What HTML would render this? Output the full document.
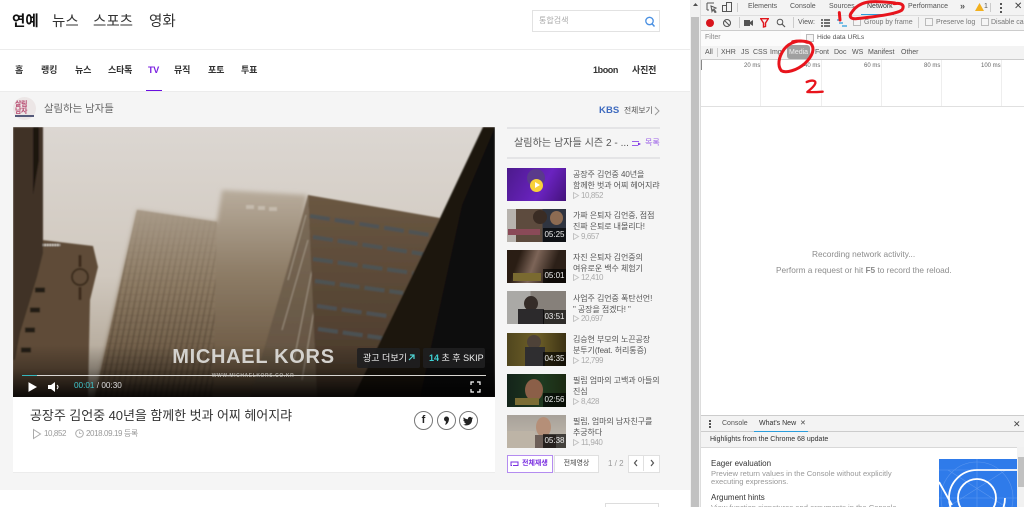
<!DOCTYPE html>
<html lang="ko"><head><meta charset="utf-8"><title>연예</title>
<style>
html,body{margin:0;padding:0;background:#fff;width:1024px;height:507px;overflow:hidden}
#r{position:relative;width:1024px;height:507px;overflow:hidden;background:#fff;font-family:"Liberation Sans","Noto Sans CJK KR",sans-serif;color:#222}
#r div{position:absolute;white-space:nowrap}
.n{font-size:9px;font-weight:700;color:#333;top:64px;line-height:12px;letter-spacing:-.2px}
.g{font-size:14.500px;top:12px;line-height:20px;color:#333}
.t{font-size:8px;color:#555;line-height:11px;left:573px;letter-spacing:-.08px}
.v{font-size:8px;color:#aaa;line-height:10px;left:581px;letter-spacing:-.4px}
.p{position:absolute;left:573px}
.th{left:507px;width:59px;height:33px;overflow:hidden}
.d{right:0;bottom:0;width:23px;height:14px;background:rgba(0,0,0,.65);color:#eee;font-size:8px;line-height:14px;text-align:center}
.dt{font-family:"Liberation Sans",sans-serif;font-size:7px;color:#555;line-height:10px}
.ck{width:6px;height:6px;border:1px solid #bbb;background:#f5f5f5}
.ms{font-family:"Liberation Sans",sans-serif;font-size:6px;color:#666;top:62px;line-height:8px}
.gl{top:60px;width:1px;height:46px;background:#eee}
.c{width:17px;height:17px;border:1px solid #777;border-radius:50%;top:411px;background:#fff;text-align:center;font-size:11px;line-height:17px;font-weight:700;color:#222}
</style></head><body><div id="r">

<div style="left:0;top:0;width:690px;height:507px;background:#fff"></div>
<div class="g" style="left:12px;font-weight:700;color:#111">연예</div>
<div class="g" style="left:52px">뉴스</div>
<div class="g" style="left:93px">스포츠</div>
<div class="g" style="left:149px">영화</div>
<div style="left:532px;top:10px;width:126px;height:20px;border:1px solid #e2e2e2"></div>
<div style="left:539px;top:15px;font-size:8px;color:#aaa;line-height:11px">통합검색</div>
<svg style="position:absolute;left:644px;top:16px" width="12" height="12" viewBox="0 0 12 12"><circle cx="5.500" cy="5" r="3.700" fill="none" stroke="#4a90e2" stroke-width="1.300"/><path d="M8 7.800L10.500 10.500" stroke="#4a90e2" stroke-width="1.500"/></svg>
<div style="left:0;top:49px;width:690px;height:1px;background:#ececec"></div>

<div class="n" style="left:15px">홈</div>
<div class="n" style="left:41px">랭킹</div>
<div class="n" style="left:75px">뉴스</div>
<div class="n" style="left:108px">스타톡</div>
<div class="n" style="left:148px;color:#7a1fe0">TV</div>
<div class="n" style="left:174px">뮤직</div>
<div class="n" style="left:208px">포토</div>
<div class="n" style="left:241px">투표</div>
<div class="n" style="left:593px;letter-spacing:-.4px">1boon</div>
<div class="n" style="left:632px">사진전</div>

<div style="left:0;top:91px;width:690px;height:399px;background:#f5f5f5;border-top:1px solid #ececec;box-sizing:border-box"></div>
<div style="left:146px;top:90px;width:16px;height:1px;background:#6a10e0"></div>
<div style="left:13px;top:97px;width:23px;height:23px;border-radius:50%;background:#ece6e6"></div>
<div style="left:15px;top:101px;font-size:7px;font-weight:700;color:#b84a70;line-height:7px;letter-spacing:-.5px">살림<br>남자</div>
<div style="left:15px;top:115px;width:19px;height:2px;background:#555a7a"></div>
<div style="left:44px;top:103px;font-size:10.400px;color:#666;line-height:14px">살림하는 남자들</div>
<div style="left:599px;top:104px;font-size:9.500px;font-weight:700;color:#3f6bbf;line-height:13px;letter-spacing:.1px">KBS</div>
<div style="left:624px;top:105px;font-size:7.800px;color:#555;line-height:11px">전체보기</div>
<svg style="position:absolute;left:654px;top:106px" width="7" height="10"><path d="M1 1l4 4-4 4" fill="none" stroke="#999" stroke-width="1"/></svg>

<svg style="position:absolute;left:13px;top:127px" width="482" height="270" viewBox="13 127 482 270">
<defs>
<linearGradient id="sky" x1="0" y1="0" x2="0" y2="1"><stop offset="0" stop-color="#dcd7d2"/><stop offset=".55" stop-color="#d0c8be"/><stop offset="1" stop-color="#a89c8b"/></linearGradient>
<linearGradient id="tw" x1="0" y1="0" x2="0" y2="1"><stop offset="0" stop-color="#b8ac9c"/><stop offset=".4" stop-color="#8d7c66"/><stop offset="1" stop-color="#5e4b36"/></linearGradient>
<linearGradient id="tw2" x1="0" y1="0" x2="0" y2="1"><stop offset="0" stop-color="#a89a88"/><stop offset=".4" stop-color="#8d7b64"/><stop offset="1" stop-color="#5e4c38"/></linearGradient>
<linearGradient id="fc" x1="0" y1="0" x2="0" y2="1"><stop offset="0" stop-color="#7d6d5a"/><stop offset="1" stop-color="#5e4e3c"/></linearGradient>
<linearGradient id="br" x1="0" y1="0" x2="0" y2="1"><stop offset="0" stop-color="#6a5742"/><stop offset="1" stop-color="#463628"/></linearGradient>
<linearGradient id="fd" x1="0" y1="0" x2="0" y2="1"><stop offset="0" stop-color="#000" stop-opacity="0"/><stop offset=".45" stop-color="#000" stop-opacity=".25"/><stop offset="1" stop-color="#000" stop-opacity=".88"/></linearGradient>
<pattern id="win" width="5.500" height="7" patternUnits="userSpaceOnUse" patternTransform="skewX(-11)"><rect x="0" width="1.800" height="7" fill="#3a2d20" fill-opacity=".5"/><rect y="0" width="5.500" height="1" fill="#3a2d20" fill-opacity=".25"/></pattern>
<linearGradient id="wf" x1="0" y1="0" x2="0" y2="1"><stop offset="0" stop-color="#fff" stop-opacity="0"/><stop offset="1" stop-color="#fff" stop-opacity="1"/></linearGradient>
<mask id="wm"><rect x="13" y="210" width="300" height="190" fill="url(#wf)"/></mask>
<filter id="b" x="-2%" y="-2%" width="104%" height="104%"><feGaussianBlur stdDeviation=".7"/></filter>
<filter id="b2" x="-10%" y="-10%" width="120%" height="120%"><feGaussianBlur stdDeviation="2.500"/></filter>
</defs>
<rect x="13" y="127" width="482" height="270" fill="url(#sky)"/>
<g filter="url(#b2)"><path d="M137 210L217 222L222 190L307 195L300 250L262 397L95 397Z" fill="url(#tw)"/></g>
<g filter="url(#b)">
<path d="M137 210L217 222L213 397L95 397Z" fill="url(#tw2)"/>
<path d="M137 210L217 222L213 397L95 397Z" fill="url(#win)" mask="url(#wm)"/>
<path d="M246 205h8v4h-8zM258 206h7v4h-7zM269 207h8v4h-8z" fill="#cdc4b8" opacity=".7"/>
<path d="M308 195L318 397L250 397L290 260Z" fill="url(#fc)"/>
<path d="M306 215L288 280M308 240L282 330M312 270L294 360M314 310L302 380" stroke="#c6bcad" stroke-width="1" opacity=".55"/>
<path d="M308 195L440 218L353 397L317 397Z" fill="url(#br)"/>
<g fill="none" stroke="#4c5458" stroke-width="4" stroke-dasharray="20 5" opacity=".85">
<path d="M310 216L430 235"/><path d="M313 237L423 254"/><path d="M313 259L413 273"/><path d="M315 281L403 293"/><path d="M317 306L387 316"/><path d="M318 329L382 338"/>
</g>
<path d="M440 218L483 127L495 127L495 397L353 397Z" fill="#1a1510"/>
<path d="M462 205L495 127L495 397L420 397Z" fill="#0c0a08"/>
<path d="M42 240L93 246L98 267L90 300L88 397L13 397L13 300Z" fill="#5f4c37"/>
<path d="M42 245h18" stroke="#e8e2d8" stroke-width="2" stroke-dasharray="1.500 1"/>
<path d="M13 127H43V253L37 277L20 333L15 360H13Z" fill="#3f3325"/>
<path d="M33 127V195L39 160V127Z" fill="#1c150e"/>
<circle cx="80" cy="277" r="8" fill="none" stroke="#3a2c1f" stroke-width="2"/>
<path d="M80 255v12M80 287v13" stroke="#3a2c1f" stroke-width="3"/>
<path d="M35 290h10M30 310h10M25 330h10M21 350h10" stroke="#241b12" stroke-width="5"/>
</g>
<rect x="13" y="345" width="482" height="52" fill="url(#fd)"/>
<text x="253.500" y="363" text-anchor="middle" font-family="Liberation Sans" font-weight="700" font-size="20" letter-spacing=".7" fill="#d4d2ce">MICHAEL KORS</text>
<text x="253" y="377" text-anchor="middle" font-family="Liberation Sans" font-weight="700" font-size="5" letter-spacing=".6" fill="#a5a19b">WWW.MICHAELKORS.CO.KR</text>
<rect x="357" y="348" width="63" height="20" rx="2" fill="#1f1f20" fill-opacity=".9"/>
<rect x="423" y="348" width="62" height="20" rx="2" fill="#1f1f20" fill-opacity=".9"/>
<rect x="22" y="375" width="464" height="1" fill="#d8d6d2"/>
<rect x="22" y="375" width="15" height="1" fill="#35b6bd"/>
<path d="M29 383l7 4-7 4z" fill="#fff" stroke="#fff"/>
<path d="M48 385h3l4-3v10l-4-3h-3z" fill="#fff"/><path d="M57 385q2 2 0 4" fill="none" stroke="#fff"/>
<path d="M471 385v-3h3M477 382h3v3M480 389v3h-3M474 392h-3v-3" fill="none" stroke="#fff" stroke-width="1.200"/>
<path d="M409 360l5-5M410 355h4v4" fill="none" stroke="#4fd6d6" stroke-width="1.200"/>
</svg>
<div style="left:363px;top:352px;font-size:9px;color:#eee;line-height:12px">광고 더보기</div>
<div style="left:429px;top:352px;font-size:9px;color:#eee;line-height:12px"><b style="color:#3fd3d6">14</b> 초 후 SKIP</div>
<div style="left:74px;top:380px;font-size:8.200px;color:#ddd;line-height:12px"><span style="color:#3fc6cc">00:01</span> / 00:30</div>

<div style="left:13px;top:397px;width:482px;height:75px;background:#fff;border-bottom:1px solid #ececec"></div>
<div style="left:30px;top:407px;font-size:13px;color:#333;line-height:18px;letter-spacing:-.05px">공장주 김언중 40년을 함께한 벗과 어찌 헤어지랴</div>
<svg style="position:absolute;left:32px;top:428px" width="10" height="12"><path d="M1.500 1.500l7 4.500-7 4.500z" fill="none" stroke="#aaa"/></svg>
<div style="left:44px;top:428px;font-size:8px;color:#999;line-height:11px;letter-spacing:-.4px">10,852</div>
<svg style="position:absolute;left:74px;top:428px" width="11" height="11"><circle cx="5.500" cy="5.500" r="3.800" fill="none" stroke="#aaa"/><path d="M5.500 3.500v2h2" fill="none" stroke="#aaa" stroke-width=".8"/></svg>
<div style="left:86px;top:428px;font-size:8px;color:#999;line-height:11px;letter-spacing:-.4px">2018.09.19 등록</div>
<div class="c" style="left:414px;font-family:'Liberation Sans',sans-serif">f</div>
<div class="c" style="left:437px"></div>
<svg style="position:absolute;left:437px;top:411px" width="19" height="19"><circle cx="9.500" cy="8" r="2.500" fill="#222"/><path d="M11.800 8.500C11.800 11 10.500 12.800 8.500 14L8.300 13C9 12 9 11 8.800 10z" fill="#222"/></svg>
<div class="c" style="left:459px"></div>
<svg style="position:absolute;left:459px;top:411px" width="19" height="19"><path d="M14 6.500l-1.200.4c-.4-.6-1-1-1.800-1-1.400 0-2.300 1.100-2 2.400-1.800-.1-3.300-.9-4.300-2.100-.6 1-.3 2.200.6 2.900l-1-.3c0 1.100.8 2 1.800 2.200l-.9.100c.3.800 1.100 1.400 2 1.500-.9.700-2 1-3.100.9 3.800 2.300 9.200.2 9-5.100z" fill="#222"/></svg>

<div style="left:507px;top:127px;width:153px;height:2px;background:#e4e4e6"></div>
<div style="left:514px;top:137px;font-size:10.100px;color:#555;line-height:14px">살림하는 남자들 시즌 2 - ...</div>
<svg style="position:absolute;left:632px;top:140px" width="10" height="7"><path d="M0 1.500h7M0 5.500h6" stroke="#9a5ee8" stroke-width="1"/><path d="M6 2.500l3 1.500-3 1.500z" fill="#7a2fe0"/></svg>
<div style="left:645px;top:137px;font-size:8px;color:#9a5ee8;line-height:12px">목록</div>
<div style="left:507px;top:157px;width:153px;height:2px;background:#e4e4e6"></div>

<div class="th" style="top:168px;background:linear-gradient(120deg,#4c1a8c,#6a23c0 60%,#43127a)">
<div style="left:20px;top:1px;width:18px;height:18px;border-radius:50%;background:#5a3a8c"></div>
<div style="left:23px;top:11px;width:13px;height:13px;border-radius:50%;background:#f7d13a"></div>
<div style="left:28px;top:14px;width:0;height:0;border-left:5px solid #fff;border-top:3.500px solid transparent;border-bottom:3.500px solid transparent"></div>
</div>
<div class="th" style="top:209px;background:linear-gradient(90deg,#b7b3ae 0 15%,#5d4b3e 15% 60%,#2f3440 60%)">
<div style="left:26px;top:1px;width:14px;height:14px;border-radius:50%;background:#3a2c24"></div>
<div style="left:43px;top:2px;width:13px;height:14px;border-radius:50%;background:#8d6b52"></div>
<div style="left:1px;top:20px;width:32px;height:6px;background:#8a4a58"></div>
<div class="d">05:25</div></div>
<div class="th" style="top:250px;background:linear-gradient(110deg,#2a1d14 20%,#7d6558 45%,#2c2018 75%)">
<div style="left:6px;top:23px;width:28px;height:8px;background:#7a6a30"></div>
<div class="d">05:01</div></div>
<div class="th" style="top:291px;background:linear-gradient(90deg,#aaa9a6 0 40%,#86807a 40% 100%)">
<div style="left:17px;top:5px;width:14px;height:15px;border-radius:50%;background:#352c28"></div>
<div style="left:11px;top:18px;width:26px;height:15px;background:#2c2a2c"></div>
<div class="d">03:51</div></div>
<div class="th" style="top:333px;background:linear-gradient(90deg,#50461e,#6e6028 50%,#3c3214)">
<div style="left:20px;top:2px;width:14px;height:14px;border-radius:50%;background:#4e4238"></div>
<div style="left:18px;top:14px;width:20px;height:19px;background:#2f2e30"></div>
<div class="d">04:35</div></div>
<div class="th" style="top:374px;background:linear-gradient(90deg,#14241a,#1f3a20 60%,#1c2a12)">
<div style="left:18px;top:5px;width:18px;height:22px;border-radius:50%;background:#8b5f48"></div>
<div style="left:8px;top:24px;width:24px;height:7px;background:#7c6d35"></div>
<div class="d">02:56</div></div>
<div class="th" style="top:415px;background:linear-gradient(#a8a29a,#c4bcb0)">
<div style="left:29px;top:2px;width:15px;height:20px;border-radius:50%;background:#b58f78"></div>
<div style="left:24px;top:20px;width:25px;height:13px;background:#6d5f58"></div>
<div style="left:0;top:16px;width:28px;height:17px;background:#bdb4a6"></div>
<div class="d">05:38</div></div>

<div class="t" style="top:169px">공장주 김언중 40년을<br>함께한 벗과 어찌 헤어지랴</div><svg class="p" style="top:192px" width="7" height="7"><path d="M.5.500L5.500 3.500.5 6.500z" fill="none" stroke="#c4c4c4"/></svg><div class="v" style="top:191px">10,852</div>
<div class="t" style="top:210px">가짜 은퇴자 김언중, 점점<br>진짜 은퇴로 내몰리다!</div><svg class="p" style="top:233px" width="7" height="7"><path d="M.5.500L5.500 3.500.5 6.500z" fill="none" stroke="#c4c4c4"/></svg><div class="v" style="top:232px">9,657</div>
<div class="t" style="top:252px">자진 은퇴자 김언중의<br>여유로운 백수 체험기</div><svg class="p" style="top:274px" width="7" height="7"><path d="M.5.500L5.500 3.500.5 6.500z" fill="none" stroke="#c4c4c4"/></svg><div class="v" style="top:273px">12,410</div>
<div class="t" style="top:293px">사업주 김언중 폭탄선언!<br>" 공장을 접겠다! "</div><svg class="p" style="top:315px" width="7" height="7"><path d="M.5.500L5.500 3.500.5 6.500z" fill="none" stroke="#c4c4c4"/></svg><div class="v" style="top:314px">20,697</div>
<div class="t" style="top:334px">김승현 부모의 노끈공장<br>분투기(feat. 허리통증)</div><svg class="p" style="top:357px" width="7" height="7"><path d="M.5.500L5.500 3.500.5 6.500z" fill="none" stroke="#c4c4c4"/></svg><div class="v" style="top:356px">12,799</div>
<div class="t" style="top:375px">필립 엄마의 고백과 아들의<br>진심</div><svg class="p" style="top:398px" width="7" height="7"><path d="M.5.500L5.500 3.500.5 6.500z" fill="none" stroke="#c4c4c4"/></svg><div class="v" style="top:397px">8,428</div>
<div class="t" style="top:416px">필립, 엄마의 남자친구를<br>추궁하다</div><svg class="p" style="top:439px" width="7" height="7"><path d="M.5.500L5.500 3.500.5 6.500z" fill="none" stroke="#c4c4c4"/></svg><div class="v" style="top:438px">11,940</div>

<div style="left:507px;top:455px;width:44px;height:16px;border:1px solid #b48cf0;background:#fff"></div>
<div style="left:522px;top:456px;font-size:7px;line-height:16px;color:#7a2fe0;font-weight:700">전체재생</div>
<svg style="position:absolute;left:510px;top:460px" width="10" height="7"><path d="M2 5.500H1V2h7M8 1.500V5.500H3" fill="none" stroke="#7a2fe0"/></svg>
<div style="left:554px;top:455px;width:43px;height:16px;border:1px solid #e0e0e0;background:#fff;font-size:7px;line-height:16px;color:#444;text-align:center">전체영상</div>
<div style="left:608px;top:458px;font-size:8px;color:#999;line-height:11px">1 / 2</div>
<div style="left:628px;top:455px;width:30px;height:16px;border:1px solid #e0e0e0;background:#fff"></div>
<div style="left:643px;top:455px;width:1px;height:16px;background:#e0e0e0"></div>
<svg style="position:absolute;left:633px;top:459px" width="26" height="9"><path d="M4 1L1.500 4 4 7" fill="none" stroke="#555" stroke-width="1.200"/><path d="M18 1l2.500 3L18 7" fill="none" stroke="#555" stroke-width="1.200"/></svg>
<div style="left:605px;top:503px;width:54px;height:4px;border:1px solid #ddd;border-bottom:0;background:#fff;box-sizing:border-box"></div>

<div style="left:690px;top:0;width:10px;height:507px;background:#f1f1f1"></div>
<div style="left:691px;top:17px;width:8px;height:490px;background:#c1c1c1"></div>
<svg style="position:absolute;left:692px;top:2px" width="7" height="5"><path d="M3.500 1L6 4H1z" fill="#505050"/></svg>

<div style="left:700px;top:0;width:324px;height:507px;background:#fff;border-left:1px solid #ddd;box-sizing:border-box"></div>
<div style="left:701px;top:0;width:323px;height:15px;background:#f3f3f3;border-bottom:1px solid #ddd"></div>
<div style="left:701px;top:16px;width:323px;height:14px;background:#f3f3f3;border-bottom:1px solid #ccc"></div>
<div style="left:701px;top:31px;width:323px;height:15px;background:#fff"></div>
<div style="left:701px;top:31px;width:100px;height:15px;background:#fbfbfb"></div>
<div style="left:701px;top:46px;width:323px;height:13px;background:#f3f3f3;border-bottom:1px solid #ccc"></div>
<svg style="position:absolute;left:706px;top:2px" width="32" height="11"><path d="M1 1h7M1 1v7M1 8h2M5 4l5 2-2 1 2 3-1 .500-2-3-1 2z" fill="none" stroke="#555"/><rect x="16.500" y="3.500" width="4" height="6" fill="none" stroke="#555"/><rect x="20.500" y=".5" width="5" height="9" fill="none" stroke="#555"/></svg>
<div style="left:737px;top:3px;width:1px;height:9px;background:#ccc"></div>
<div class="dt" style="left:748px;top:2px">Elements</div>
<div class="dt" style="left:790px;top:2px">Console</div>
<div class="dt" style="left:829px;top:2px">Sources</div>
<div class="dt" style="left:867px;top:2px;color:#333">Network</div>
<div style="left:861px;top:14px;width:33px;height:1px;background:#2a9ddc"></div>
<div class="dt" style="left:908px;top:2px">Performance</div>
<div class="dt" style="left:960px;top:1px;font-weight:700;font-size:9px">»</div>
<svg style="position:absolute;left:975px;top:3px" width="9" height="8"><path d="M4.500 0L9 8H0z" fill="#f2b01e"/></svg>
<div class="dt" style="left:984px;top:2px">1</div>
<div style="left:990px;top:3px;width:1px;height:9px;background:#ccc"></div>
<div style="left:1000px;top:3px;width:2px;height:2px;background:#555;box-shadow:0 4px #555,0 8px #555"></div>
<div class="dt" style="left:1014px;top:2px;font-size:10px;color:#444">✕</div>

<div style="left:706px;top:19px;width:8px;height:8px;border-radius:50%;background:#d8141c"></div>
<svg style="position:absolute;left:722px;top:18px" width="10" height="10"><circle cx="5" cy="5" r="3.500" fill="none" stroke="#555" stroke-width="1.100"/><path d="M2.500 2.500l5 5" stroke="#555" stroke-width="1.100"/></svg>
<div style="left:739px;top:17px;width:1px;height:11px;background:#ccc"></div>
<svg style="position:absolute;left:744px;top:19px" width="9" height="8"><rect y="1" width="6" height="6" fill="#555"/><path d="M6 3l3-2v6L6 5z" fill="#555"/></svg>
<svg style="position:absolute;left:760px;top:18px" width="9" height="10"><path d="M.7.700h7.600L5.500 5v3.500L3.500 9V5z" fill="none" stroke="#e0161c" stroke-width="1.400"/></svg>
<svg style="position:absolute;left:776px;top:18px" width="10" height="10"><circle cx="4" cy="4" r="2.800" fill="none" stroke="#555"/><path d="M6 6l3 3" stroke="#555" stroke-width="1.200"/></svg>
<div style="left:793px;top:17px;width:1px;height:11px;background:#ccc"></div>
<div class="dt" style="left:798px;top:18px">View:</div>
<svg style="position:absolute;left:821px;top:19px" width="9" height="8"><path d="M0 1h2M3 1h6M0 4h2M3 4h6M0 7h2M3 7h6" stroke="#444" stroke-width="1.600"/></svg>
<svg style="position:absolute;left:837px;top:19px" width="10" height="8"><path d="M0 1h4M2 4h4M5 7h5" stroke="#2a9ddc" stroke-width="1.200"/></svg>
<div class="ck" style="left:853px;top:18px"></div><div class="dt" style="left:864px;top:18px;color:#777">Group by frame</div>
<div style="left:918px;top:17px;width:1px;height:11px;background:#ccc"></div>
<div class="ck" style="left:925px;top:18px"></div><div class="dt" style="left:936px;top:18px;color:#777">Preserve log</div>
<div class="ck" style="left:981px;top:18px"></div><div class="dt" style="left:991px;top:18px;color:#777;width:33px;overflow:hidden">Disable cache</div>

<div class="dt" style="left:705px;top:33px;color:#888">Filter</div>
<div class="ck" style="left:806px;top:34px"></div><div class="dt" style="left:817px;top:33px;font-size:6.700px">Hide data URLs</div>

<div class="dt" style="left:705px;top:48px">All</div>
<div style="left:717px;top:48px;width:1px;height:9px;background:#ccc"></div>
<div class="dt" style="left:721px;top:48px">XHR</div>
<div class="dt" style="left:741px;top:48px">JS</div>
<div class="dt" style="left:753px;top:48px">CSS</div>
<div class="dt" style="left:770px;top:48px">Img</div>
<div style="left:787px;top:45px;width:23px;height:14px;border-radius:3px;background:#a0a0a0"></div>
<div class="dt" style="left:789px;top:48px;color:#eee">Media</div>
<div class="dt" style="left:815px;top:48px">Font</div>
<div class="dt" style="left:834px;top:48px">Doc</div>
<div class="dt" style="left:852px;top:48px">WS</div>
<div class="dt" style="left:868px;top:48px">Manifest</div>
<div class="dt" style="left:901px;top:48px">Other</div>

<div style="left:701px;top:60px;width:1px;height:10px;background:#888"></div>
<div class="gl" style="left:760px"></div><div class="gl" style="left:821px"></div><div class="gl" style="left:881px"></div><div class="gl" style="left:941px"></div><div class="gl" style="left:1001px"></div>
<div class="ms" style="left:744px">20 ms</div>
<div class="ms" style="left:804px">40 ms</div>
<div class="ms" style="left:864px">60 ms</div>
<div class="ms" style="left:924px">80 ms</div>
<div class="ms" style="left:981px">100 ms</div>
<div style="left:701px;top:106px;width:323px;height:1px;background:#e0e0e0"></div>

<div class="dt" style="left:812px;top:249px;font-size:8.300px;color:#8c8c8c">Recording network activity...</div>
<div class="dt" style="left:776px;top:265px;font-size:8.300px;color:#8c8c8c">Perform a request or hit <b>F5</b> to record the reload.</div>

<div style="left:701px;top:415px;width:323px;height:15px;background:#f3f3f3;border-top:1px solid #ccc;border-bottom:1px solid #ccc"></div>
<div style="left:709px;top:420px;width:2px;height:2px;background:#555;box-shadow:0 3px #555,0 6px #555"></div>
<div class="dt" style="left:722px;top:419px">Console</div>
<div class="dt" style="left:759px;top:419px;color:#333">What's New</div>
<div class="dt" style="left:800px;top:419px;font-size:7px;color:#444">✕</div>
<div style="left:754px;top:431px;width:54px;height:1px;background:#2a9ddc"></div>
<div class="dt" style="left:1013px;top:419px;font-size:9px;color:#444">✕</div>
<div style="left:701px;top:432px;width:323px;height:15px;background:#f3f3f3;border-bottom:1px solid #d8d8d8"></div>
<div class="dt" style="left:710px;top:435px;color:#333">Highlights from the Chrome 68 update</div>
<div class="dt" style="left:711px;top:458px;font-size:8px;line-height:11px;color:#333">Eager evaluation</div>
<div class="dt" style="left:711px;top:470px;font-size:7.600px;color:#999;line-height:8px">Preview return values in the Console without explicitly<br>executing expressions.</div>
<div class="dt" style="left:711px;top:492px;font-size:8px;line-height:11px;color:#333">Argument hints</div>
<div class="dt" style="left:711px;top:504px;height:3px;line-height:8px;overflow:hidden;font-size:7.600px;color:#999">View function signatures and arguments in the Console</div>
<svg style="position:absolute;left:939px;top:459px" width="78" height="48" viewBox="0 0 78 48">
<rect width="78" height="48" fill="#2f7bea"/>
<g stroke="#5b97ef" stroke-width=".6" fill="none"><circle cx="38" cy="39" r="36"/><path d="M0 11H78M0 39H78M38 0V48M9 11L67 48M67 11L9 48"/></g>
<path d="M78 11H38A28 28 0 1 0 66 39M0 23L13 46" fill="none" stroke="#fff" stroke-width="1.800"/>
<circle cx="38" cy="39" r="19" fill="none" stroke="#fff" stroke-width="1.800"/>
</svg>
<div style="left:1017px;top:447px;width:7px;height:60px;background:#f1f1f1"></div>
<div style="left:1018px;top:457px;width:6px;height:30px;background:#c1c1c1"></div>

<svg style="position:absolute;left:690px;top:0" width="334" height="110" viewBox="0 0 1002 330">
<g fill="none" stroke="#e8141c" stroke-width="9" stroke-linecap="round" stroke-linejoin="round">
<path d="M612 11C635 7 645 16 636 30C620 42 560 50 500 56C480 58 476 48 486 36C495 22 508 12 530 7C550 3 590 6 615 9"/>
<path d="M352 127C330 118 300 125 282 148C265 172 262 198 274 212C288 220 320 212 345 190C368 168 376 145 362 130C350 122 325 122 308 125"/>
<path d="M448 38L450 60"/>
<path d="M350 246C368 238 382 242 374 254C368 264 358 270 352 276C368 277 385 276 398 275" stroke-width="7"/>
</g></svg>
</div></body></html>
